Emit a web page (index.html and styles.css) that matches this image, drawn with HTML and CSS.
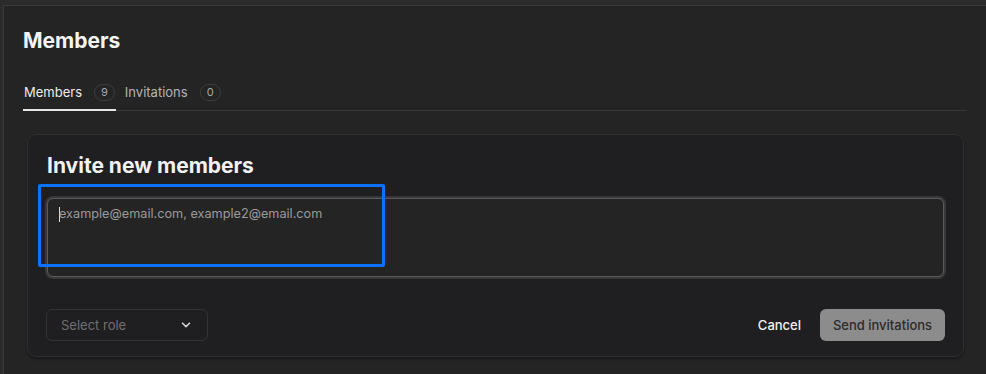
FILE: index.html
```html
<!DOCTYPE html>
<html lang="en">
<head>
<meta charset="utf-8">
<title>Members</title>
<link rel="stylesheet" href="styles.css">
</head>
<body>
<div class="panel">
  <h1 class="title">Members</h1>
  <nav class="tabs">
    <div class="tab active"><span class="tab-label">Members</span><span class="badge">9</span></div>
    <div class="tab"><span class="tab-label">Invitations</span><span class="badge">0</span></div>
  </nav>
  <section class="card">
    <h2 class="card-title">Invite new members</h2>
    <div class="emails"><span class="caret"></span><span class="placeholder">example@email.com, example2@email.com</span></div>
    <div class="highlight"></div>
    <div class="footer">
      <div class="select"><span class="select-label">Select role</span>
        <svg class="chev" width="10" height="6" viewBox="0 0 10 6"><path d="M1.5 1.2 L5 4.6 L8.5 1.2" fill="none" stroke="#d0d0d0" stroke-width="1.6" stroke-linecap="round" stroke-linejoin="round"/></svg>
      </div>
      <div class="actions">
        <button class="btn-cancel">Cancel</button>
        <button class="btn-send">Send invitations</button>
      </div>
    </div>
  </section>
</div>
</body>
</html>
```
FILE: styles.css
```css
* { box-sizing: border-box; }
html, body { margin: 0; height: 100%; }
body {
  background: #2b2b2b;
  font-family: Inter, "Noto Sans", sans-serif;
  color: #ededed;
  padding: 5px 0 0 3px;
  overflow: hidden;
}
.panel {
  background: #242424;
  border-left: 1px solid #3a3a3a;
  border-top: 1px solid #3a3a3a;
  min-height: 100%;
  padding: 20px 19px 0 19px;
}
.title {
  margin: 0;
  font-size: 21px;
  line-height: 30px;
  font-weight: 700;
  color: #f4f4f4;
}
.tabs {
  display: flex;
  gap: 8px;
  margin-top: 19px;
  border-bottom: 1px solid #383838;
}
.tab {
  display: flex;
  align-items: center;
  gap: 12px;
  height: 36px;
  padding: 0 1px;
  margin-bottom: -1px;
  border-bottom: 2px solid transparent;
  font-size: 13px;
  color: #b4b4b4;
}
.tab.active { color: #ececec; border-bottom-color: #e6e6e6; }
.badge {
  display: inline-flex;
  align-items: center;
  justify-content: center;
  min-width: 20px;
  height: 17px;
  padding: 0 6px;
  border: 1px solid #3c3c3c;
  border-radius: 9px;
  font-size: 11px;
  color: #a8a8a8;
}
.card {
  position: relative;
  margin: 23px 3px 0 4px;
  background: #1f1f22;
  border: 1px solid #2f2f31;
  border-radius: 9px;
  padding: 17px 19px 15px 19px;
  box-shadow: 0 2px 3px rgba(0,0,0,0.35);
}
.card-title {
  margin: 0;
  font-size: 21px;
  line-height: 28px;
  font-weight: 700;
  color: #f2f2f2;
}
.emails {
  margin-top: 18px;
  height: 79px;
  background: #242424;
  border: 1px solid #5b5b5b;
  border-radius: 6px;
  box-shadow: 0 0 0 2px #38383a;
  padding: 6px 11px;
  font-size: 12.7px;
  line-height: 18px;
  display: flex;
  align-items: flex-start;
}
.caret {
  display: inline-block;
  width: 1px;
  height: 15px;
  margin-top: 2px;
  background: #dcdcdc;
  margin-right: -1px;
}
.placeholder { color: #9a9a9a; }
.highlight {
  position: absolute;
  left: 10px;
  top: 49px;
  width: 347px;
  height: 83px;
  border: 3px solid #0a72ff;
  border-radius: 2px;
  pointer-events: none;
}
.footer {
  display: flex;
  justify-content: space-between;
  align-items: center;
  margin-top: 32px;
}
.select {
  width: 162px;
  height: 32px;
  margin-left: -1px;
  border: 1px solid #333336;
  border-radius: 6px;
  display: flex;
  align-items: center;
  justify-content: space-between;
  padding: 0 16px 0 14px;
  font-size: 13px;
  color: #6f6f6f;
}
.actions { display: flex; align-items: center; gap: 7px; margin-right: -1px; }
button {
  font-family: inherit;
  font-size: 13px;
  border: 0;
  cursor: pointer;
  white-space: nowrap;
}
.btn-cancel {
  background: transparent;
  color: #f2f2f2;
  font-weight: 500;
  padding: 0 12px;
  height: 32px;
}
.btn-send {
  background: #8c8c8c;
  color: #2b2b2b;
  font-weight: 500;
  height: 32px;
  padding: 0 8px;
  border-radius: 6px;
  width: 125px;
}
```
